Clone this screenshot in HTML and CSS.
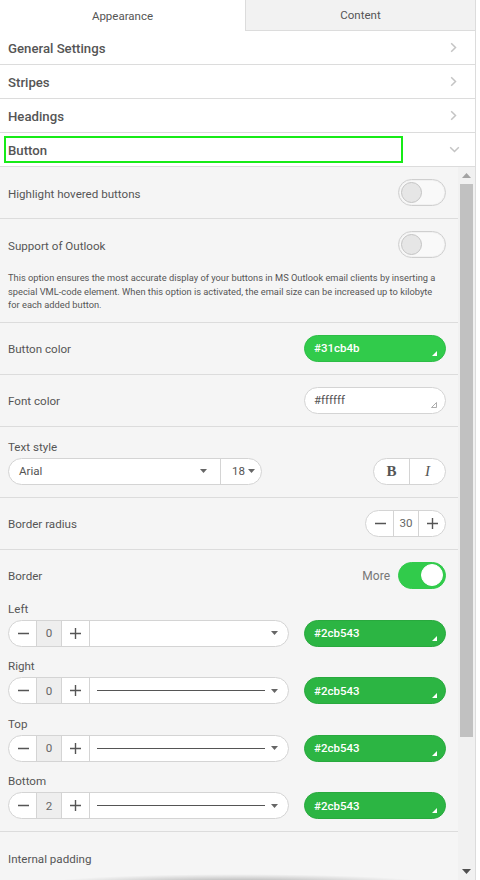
FILE: index.html
```html
<!DOCTYPE html>
<html>
<head>
<meta charset="utf-8">
<link rel="stylesheet" href="styles.css">
</head>
<body>
<div class="panel">
  <div class="tabs">
    <div class="tab active">Appearance</div>
    <div class="tab">Content</div>
  </div>

  <div class="acc-head"><span class="acc-title">General Settings</span><svg class="chev" width="7" height="11" viewBox="0 0 7 11"><path d="M1.2 1.2l4.3 4.3-4.3 4.3" fill="none" stroke="#c4c4c4" stroke-width="1.5"/></svg></div>
  <div class="acc-head"><span class="acc-title">Stripes</span><svg class="chev" width="7" height="11" viewBox="0 0 7 11"><path d="M1.2 1.2l4.3 4.3-4.3 4.3" fill="none" stroke="#c4c4c4" stroke-width="1.5"/></svg></div>
  <div class="acc-head"><span class="acc-title">Headings</span><svg class="chev" width="7" height="11" viewBox="0 0 7 11"><path d="M1.2 1.2l4.3 4.3-4.3 4.3" fill="none" stroke="#c4c4c4" stroke-width="1.5"/></svg></div>
  <div class="acc-head open"><span class="acc-title focus">Button</span><svg class="chev-down" width="11" height="7" viewBox="0 0 11 7"><path d="M1.2 1.2l4.3 4.3 4.3-4.3" fill="none" stroke="#c4c4c4" stroke-width="1.5"/></svg></div>

  <div class="body">
    <div class="content">
      <div class="row">
        <div class="line"><span class="label">Highlight hovered buttons</span><span class="toggle"><span class="knob"></span></span></div>
      </div>
      <div class="row row-desc">
        <div class="line"><span class="label">Support of Outlook</span><span class="toggle"><span class="knob"></span></span></div>
        <p class="desc">This option ensures the most accurate display of your buttons in MS Outlook email clients by inserting a special VML-code element. When this option is activated, the email size can be increased up to kilobyte for each added button.</p>
      </div>
      <div class="row">
        <div class="line"><span class="label">Button color</span>
          <span class="color green1">#31cb4b<svg class="corner" width="5" height="5" viewBox="0 0 5 5"><path d="M0 5L5 0V5Z" fill="#fff"/></svg></span></div>
      </div>
      <div class="row">
        <div class="line"><span class="label">Font color</span>
          <span class="color white">#ffffff<svg class="corner" width="6" height="6" viewBox="0 0 6 6"><path d="M0.5 5.5L5.5 0.5V5.5Z" fill="none" stroke="#999" stroke-width="0.8" stroke-linejoin="round"/></svg></span></div>
      </div>
      <div class="row">
        <div class="sublabel">Text style</div>
        <div class="line">
          <div class="fontsel">
            <span class="fs-name">Arial<svg class="caret" width="7" height="4" viewBox="0 0 7 4"><path d="M0 0h7L3.5 4z" fill="#666"/></svg></span>
            <span class="fs-size">18<svg class="caret" width="7" height="4" viewBox="0 0 7 4"><path d="M0 0h7L3.5 4z" fill="#666"/></svg></span>
          </div>
          <div class="bi"><span class="b">B</span><span class="i">I</span></div>
        </div>
      </div>
      <div class="row">
        <div class="line"><span class="label">Border radius</span>
          <div class="stepper">
            <span class="st-btn"><svg width="11" height="11" viewBox="0 0 11 11"><path d="M0 5.5h11" stroke="#555" stroke-width="1.4"/></svg></span>
            <span class="st-val">30</span>
            <span class="st-btn"><svg width="11" height="11" viewBox="0 0 11 11"><path d="M0 5.5h11M5.5 0v11" stroke="#555" stroke-width="1.4"/></svg></span>
          </div>
        </div>
      </div>
      <div class="row">
        <div class="line"><span class="label">Border</span><span class="more"><span class="more-text">More</span><span class="toggle on"><span class="knob"></span></span></span></div>

        <div class="group">
          <div class="sublabel">Left</div>
          <div class="line">
            <div class="bstep">
              <span class="st-btn"><svg width="11" height="11" viewBox="0 0 11 11"><path d="M0 5.5h11" stroke="#555" stroke-width="1.4"/></svg></span>
              <span class="st-val gray">0</span>
              <span class="st-btn"><svg width="11" height="11" viewBox="0 0 11 11"><path d="M0 5.5h11M5.5 0v11" stroke="#555" stroke-width="1.4"/></svg></span>
              <span class="bsel"><span class="bline empty"></span><svg class="caret" width="7" height="4" viewBox="0 0 7 4"><path d="M0 0h7L3.5 4z" fill="#666"/></svg></span>
            </div>
            <span class="color green2">#2cb543<svg class="corner" width="5" height="5" viewBox="0 0 5 5"><path d="M0 5L5 0V5Z" fill="#fff"/></svg></span>
          </div>
        </div>

        <div class="group">
          <div class="sublabel">Right</div>
          <div class="line">
            <div class="bstep">
              <span class="st-btn"><svg width="11" height="11" viewBox="0 0 11 11"><path d="M0 5.5h11" stroke="#555" stroke-width="1.4"/></svg></span>
              <span class="st-val gray">0</span>
              <span class="st-btn"><svg width="11" height="11" viewBox="0 0 11 11"><path d="M0 5.5h11M5.5 0v11" stroke="#555" stroke-width="1.4"/></svg></span>
              <span class="bsel"><span class="bline"></span><svg class="caret" width="7" height="4" viewBox="0 0 7 4"><path d="M0 0h7L3.5 4z" fill="#666"/></svg></span>
            </div>
            <span class="color green2">#2cb543<svg class="corner" width="5" height="5" viewBox="0 0 5 5"><path d="M0 5L5 0V5Z" fill="#fff"/></svg></span>
          </div>
        </div>

        <div class="group">
          <div class="sublabel">Top</div>
          <div class="line">
            <div class="bstep">
              <span class="st-btn"><svg width="11" height="11" viewBox="0 0 11 11"><path d="M0 5.5h11" stroke="#555" stroke-width="1.4"/></svg></span>
              <span class="st-val gray">0</span>
              <span class="st-btn"><svg width="11" height="11" viewBox="0 0 11 11"><path d="M0 5.5h11M5.5 0v11" stroke="#555" stroke-width="1.4"/></svg></span>
              <span class="bsel"><span class="bline"></span><svg class="caret" width="7" height="4" viewBox="0 0 7 4"><path d="M0 0h7L3.5 4z" fill="#666"/></svg></span>
            </div>
            <span class="color green2">#2cb543<svg class="corner" width="5" height="5" viewBox="0 0 5 5"><path d="M0 5L5 0V5Z" fill="#fff"/></svg></span>
          </div>
        </div>

        <div class="group">
          <div class="sublabel">Bottom</div>
          <div class="line">
            <div class="bstep">
              <span class="st-btn"><svg width="11" height="11" viewBox="0 0 11 11"><path d="M0 5.5h11" stroke="#555" stroke-width="1.4"/></svg></span>
              <span class="st-val gray">2</span>
              <span class="st-btn"><svg width="11" height="11" viewBox="0 0 11 11"><path d="M0 5.5h11M5.5 0v11" stroke="#555" stroke-width="1.4"/></svg></span>
              <span class="bsel"><span class="bline"></span><svg class="caret" width="7" height="4" viewBox="0 0 7 4"><path d="M0 0h7L3.5 4z" fill="#666"/></svg></span>
            </div>
            <span class="color green2">#2cb543<svg class="corner" width="5" height="5" viewBox="0 0 5 5"><path d="M0 5L5 0V5Z" fill="#fff"/></svg></span>
          </div>
        </div>
      </div>
      <div class="row last">
        <div class="line"><span class="label">Internal padding</span></div>
      </div>
    </div>
    <div class="scrollbar">
      <div class="sb-arrow"><svg width="9" height="5" viewBox="0 0 9 5"><path d="M0 5L4.5 0 9 5z" fill="#a3a3a3"/></svg></div>
      <div class="sb-thumb"></div>
      <div class="sb-fill"></div>
      <div class="sb-arrow"><svg width="9" height="5" viewBox="0 0 9 5"><path d="M0 0h9L4.5 5z" fill="#505050"/></svg></div>
    </div>
  </div>
  <div class="shadow"></div>
</div>
</body>
</html>
```
FILE: styles.css
```css
* { box-sizing: border-box; }
html, body { margin: 0; padding: 0; background: #fff; }
body {
  font-family: Roboto, "Noto Sans", "Liberation Sans", sans-serif;
  color: #555;
  width: 480px;
  height: 880px;
  overflow: hidden;
}
.panel {
  position: relative;
  width: 476px;
  height: 880px;
  border-right: 1px solid #dcdcdc;
  display: flex;
  flex-direction: column;
  overflow: hidden;
}
.tabs {
  display: flex;
  height: 31px;
  flex: none;
}
.tab {
  flex: none;
  display: flex;
  align-items: center;
  justify-content: center;
  font-size: 11.5px;
  color: #555;
}
.tab.active {
  width: 245px;
  background: #fff;
}
.tab:not(.active) {
  flex: 1;
  background: #f2f2f2;
  border-left: 1px solid #dcdcdc;
  border-bottom: 1px solid #dcdcdc;
}
.acc-head {
  flex: none;
  height: 34px;
  display: flex;
  align-items: center;
  justify-content: space-between;
  padding: 0 18px 0 8px;
  border-bottom: 1px solid #dcdcdc;
  background: #fff;
}
.acc-head.open { padding-right: 15px; }
.acc-title {
  font-size: 13.2px;
  font-weight: 500;
  color: #555;
  padding-top: 2px;
}
.acc-title.focus {
  display: flex;
  align-items: center;
  width: 399px;
  height: 27px;
  margin-left: -4px;
  padding-left: 2px;
  border: 2px solid #17eb17;
}
.body {
  flex: 1;
  display: flex;
  background: #f5f5f5;
  min-height: 0;
}
.content {
  width: 458px;
  flex: none;
  overflow: hidden;
}
.row {
  padding: 12px 12px 12px 8px;
  border-bottom: 1px solid #dcdcdc;
}
.row.row-desc { padding-bottom: 10px; }
.row.last { border-bottom: none; }
.line {
  display: flex;
  align-items: center;
  justify-content: space-between;
  height: 27px;
}
.label {
  font-size: 11.6px;
  color: #555;
  padding-top: 2px;
}
.sublabel {
  font-size: 11.6px;
  line-height: 15px;
  padding-top: 1px;
  height: 15px;
  margin-bottom: 4px;
  color: #555;
}
.desc {
  margin: 13px 0 0;
  font-size: 9.3px;
  line-height: 13.5px;
  color: #555;
}
.toggle {
  width: 48px;
  height: 27px;
  border-radius: 14px;
  border: 1px solid #cfcfcf;
  background: #f9f9f9;
  display: flex;
  align-items: center;
  padding: 0 2px;
  box-shadow: inset 0 0 0 1px #f1f1f1;
}
.knob {
  width: 21px;
  height: 21px;
  border-radius: 50%;
  background: #e6e6e6;
  border: 1px solid #c4c4c4;
}
.toggle.on {
  background: #31cb4b;
  border-color: #31cb4b;
  box-shadow: none;
  justify-content: flex-end;
}
.toggle.on .knob {
  background: #fff;
  border-color: #fff;
  width: 22px;
  height: 22px;
}
.more { display: flex; align-items: center; gap: 8px; }
.more-text { font-size: 12px; color: #777; padding-top: 1px; }
.color {
  position: relative;
  width: 142px;
  height: 27px;
  border-radius: 14px;
  display: flex;
  align-items: center;
  padding-left: 9px;
  font-size: 11.5px;
  font-weight: 500;
}
.color.green1 { background: #31cb4b; color: #fff; border: 1px solid #2dbd46; }
.color.green2 { background: #2cb543; color: #fff; border: 1px solid #29a93e; }
.color.white { background: #fff; color: #555; border: 1px solid #d4d4d4; font-weight: 400; }
.corner {
  position: absolute;
  right: 8px;
  bottom: 5px;
}
.fontsel {
  width: 254px;
  height: 27px;
  display: flex;
  border: 1px solid #d4d4d4;
  border-radius: 14px;
  background: #fff;
  font-size: 11.6px;
  color: #555;
}
.fs-name {
  width: 212px;
  display: flex;
  align-items: center;
  justify-content: space-between;
  padding: 0 13px 0 10px;
  border-right: 1px solid #d4d4d4;
}
.fs-size {
  flex: 1;
  display: flex;
  align-items: center;
  padding-left: 11px;
  gap: 3px;
}
.bi {
  width: 73px;
  height: 27px;
  display: flex;
  border: 1px solid #d4d4d4;
  border-radius: 14px;
  background: #fff;
  font-family: "Liberation Serif", "DejaVu Serif", serif;
  font-size: 15px;
  color: #555;
}
.bi span {
  flex: 1;
  display: flex;
  align-items: center;
  justify-content: center;
}
.bi .b { font-weight: 700; border-right: 1px solid #d4d4d4; }
.bi .i { font-style: italic; }
.stepper {
  width: 81px;
  height: 27px;
  display: flex;
  border: 1px solid #d4d4d4;
  border-radius: 14px;
  background: #fff;
  overflow: hidden;
}
.st-btn {
  width: 27px;
  flex: none;
  display: flex;
  align-items: center;
  justify-content: center;
}
.st-val {
  width: 26px;
  flex: none;
  display: flex;
  align-items: center;
  justify-content: center;
  border-left: 1px solid #d4d4d4;
  border-right: 1px solid #d4d4d4;
  font-size: 11.6px;
  color: #666;
}
.st-val.gray { background: #eee; }
.stepper .st-btn:first-child { padding-left: 2px; }
.group { margin-top: 11.5px; }
.row .line + .group { margin-top: 12px; }
.bstep {
  width: 281px;
  height: 27px;
  display: flex;
  border: 1px solid #d4d4d4;
  border-radius: 14px;
  background: #fff;
  overflow: hidden;
}
.bstep .st-btn:first-child { padding-left: 2px; }
.bsel {
  flex: 1;
  display: flex;
  align-items: center;
  border-left: 1px solid #d4d4d4;
  padding: 0 10px 0 7px;
  gap: 6px;
}
.bline {
  flex: 1;
  height: 1px;
  background: #555;
}
.bline.empty { background: transparent; }
.scrollbar {
  width: 17px;
  flex: none;
  background: #f1f1f1;
  display: flex;
  flex-direction: column;
  align-items: center;
}
.sb-arrow {
  height: 17px;
  flex: none;
  display: flex;
  align-items: center;
  justify-content: center;
}
.sb-thumb {
  width: 13px;
  height: 553px;
  background: #c1c1c1;
  flex: none;
}
.sb-fill { flex: 1; }
.shadow {
  position: absolute;
  left: 40px;
  right: 40px;
  bottom: -14px;
  height: 20px;
  background: radial-gradient(ellipse at center, rgba(0,0,0,0.35) 0%, rgba(0,0,0,0.12) 45%, rgba(0,0,0,0) 70%);
  pointer-events: none;
}
```
